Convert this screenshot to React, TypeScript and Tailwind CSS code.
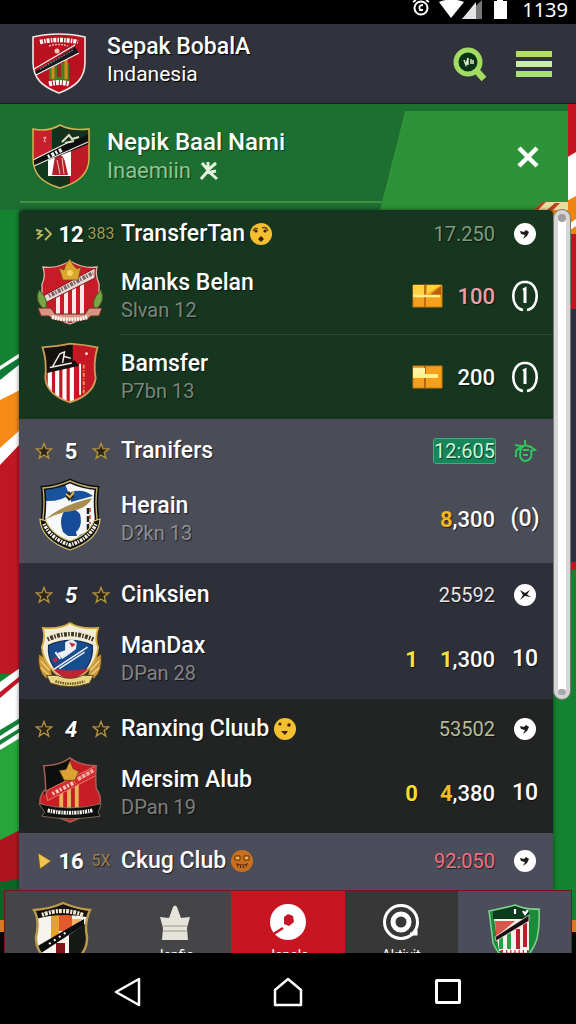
import React from 'react';

type IconProps = { className?: string };

type Item = {
  name: string;
  detail: string;
  crest: React.ReactNode;
  value: React.ReactNode;
  badge: React.ReactNode;
  height: string;
};

type Group = {
  rank: string;
  rankClass?: string;
  before: React.ReactNode;
  after: React.ReactNode;
  title: string;
  emoji?: React.ReactNode;
  total: string;
  totalClass: string;
  icon: React.ReactNode;
  className: string;
  items: Item[];
};

/* ---------- Crests ---------- */

function HeaderCrest() {
  return (
    <svg viewBox="0 0 56 62" className="h-[62px] w-14 shrink-0" aria-hidden="true">
      <defs>
        <clipPath id="header-shield">
          <path d="M2 4Q14 1 28 1Q42 1 54 4V29C54 46 44 54 28 60C12 54 2 46 2 29Z" />
        </clipPath>
      </defs>
      <g clipPath="url(#header-shield)">
        <path d="M0 0H56V62H0Z" fill="#b9111f" />
        <path d="M18 30H38V48Q28 52 18 46Z" fill="#4a7a22" />
        <path d="M22 28V46M35 26V46" stroke="#d98a1e" strokeWidth="3" />
        <path d="M28 27V44" stroke="#a3201c" strokeWidth="4" />
        <path d="M2 40L44 14L48 20L6 42Z" fill="#16181d" />
        <path d="M3 36L44 12M5 42L48 20" stroke="#f2f2f2" strokeWidth="1.2" />
        <path d="M9 36L42 17" stroke="#6c7078" strokeWidth="1.5" strokeDasharray="2 1" />
        <path d="M9 9Q28 5 47 9" fill="none" stroke="#fff" strokeWidth="4.5" strokeDasharray="3 1.2 1.5 1" />
        <path d="M18 13Q28 10 37 13" fill="none" stroke="#e9b3b3" strokeWidth="1.5" strokeDasharray="2 1" />
        <circle cx="26" cy="18" r="2.5" fill="#f1c9b8" />
        <path d="M18 51Q28 48 38 51" fill="none" stroke="#fff" strokeWidth="5" strokeDasharray="3 1 2 1" />
      </g>
      <path d="M2 4Q14 1 28 1Q42 1 54 4V29C54 46 44 54 28 60C12 54 2 46 2 29Z" fill="none" stroke="#f3e9ea" strokeWidth="1.6" />
    </svg>
  );
}

function BannerCrest() {
  return (
    <svg viewBox="0 0 60 66" className="h-[66px] w-[60px] shrink-0" aria-hidden="true">
      <defs>
        <clipPath id="banner-shield">
          <path d="M2 5Q18 8 29 1Q40 7 58 5V34C58 51 46 59 29 64C12 59 2 51 2 34Z" />
        </clipPath>
      </defs>
      <g clipPath="url(#banner-shield)">
        <path d="M0 0H60V66H0Z" fill="#13321e" />
        <path d="M0 0H21V36L0 44Z" fill="#c8202a" />
        <path d="M39 25L60 15V66H39Z" fill="#bd1a26" />
        <path d="M0 42L21 34V66H0Z" fill="#0f3a1e" />
        <path d="M17 31L40 22V52H17Z" fill="#fff" />
        <path d="M24 32C29 28 33 33 34 38L37 51H21Z" fill="#b31f28" />
        <path d="M26 36L29 50M31 34L33 50" stroke="#f3c4c4" strokeWidth="1" />
        <path d="M0 36L58 10V20L0 43Z" fill="#0c100e" />
        <path d="M2 36L36 19M3 42L57 18" stroke="#e9e9e9" strokeWidth="1.2" />
        <path d="M17 33L32 25" stroke="#f5f5f5" strokeWidth="4" strokeDasharray="2 2 3 1.5" />
        <path d="M31 18L38 11L41 15L48 13M34 19L43 17" stroke="#e4dfc1" strokeWidth="2" fill="none" />
        <path d="M12 14L15 13L13 17L15 18" stroke="#f3b8b8" strokeWidth="1" fill="none" />
      </g>
      <path d="M2 5Q18 8 29 1Q40 7 58 5V34C58 51 46 59 29 64C12 59 2 51 2 34Z" fill="none" stroke="#d4b354" strokeWidth="1.5" />
    </svg>
  );
}

function ManksCrest() {
  return (
    <svg viewBox="0 2 70 68" className="h-[68px] w-[70px] shrink-0" aria-hidden="true">
      <defs>
        <clipPath id="manks-shield">
          <path d="M8 11Q22 13 35 5Q48 13 62 11Q60 18 64 28V44Q58 60 35 68Q12 60 7 44V28Q11 20 8 11Z" />
        </clipPath>
      </defs>
      <g clipPath="url(#manks-shield)">
        <path d="M0 0H70V72H0Z" fill="#c71c28" />
        <path d="M23 38V66M31 34V66M39 31V66M47 28V66" stroke="#fbe9e6" strokeWidth="4" />
        <path d="M8 40L60 12V22L10 47Z" fill="#e9d8d4" stroke="#7d1820" />
        <path d="M14 40L58 17" stroke="#7a6668" strokeWidth="4" strokeDasharray="1.5 1.5 3 1" />
      </g>
      <path d="M8 11Q22 13 35 5Q48 13 62 11Q60 18 64 28V44Q58 60 35 68Q12 60 7 44V28Q11 20 8 11Z" fill="none" stroke="#e0b8a8" strokeWidth="1.3" />
      <path d="M4 34Q-1 46 10 54Q15 44 4 34ZM66 34Q71 46 60 54Q55 44 66 34Z" fill="#79a544" stroke="#3c5a24" />
      <path d="M24 12L29 14L31 8L35 3L38 9L42 13L46 11L43 24H28Z" fill="#dba62d" stroke="#7a4d12" strokeWidth=".8" />
      <circle cx="35" cy="17" r="3" fill="#f4d263" />
      <path d="M3 52H16L20 58H50L54 52H67L64 60H56Q51 66 35 65Q19 66 14 60H6Z" fill="#d79483" stroke="#6d2a22" />
      <path d="M17 61Q35 66 53 61" fill="none" stroke="#fff6ef" strokeWidth="4" strokeDasharray="2 .8" />
    </svg>
  );
}

function BamsferCrest() {
  return (
    <svg viewBox="0 0 70 72" className="h-[66px] w-[70px] shrink-0" aria-hidden="true">
      <defs>
        <clipPath id="bamsfer-shield">
          <path d="M5 8Q22 7 35 4Q50 5 65 8Q60 25 63 42Q60 60 35 68Q10 60 8 42Q10 22 5 8Z" />
        </clipPath>
      </defs>
      <g clipPath="url(#bamsfer-shield)">
        <path d="M0 0H70V72H0Z" fill="#c61824" />
        <path d="M0 0H38V26L10 36Z" fill="#15110f" />
        <path d="M13 35V70M21 32V70M29 30V70M37 28V70" stroke="#fff" strokeWidth="4.5" />
        <path d="M8 34L40 22L45 28L10 36Z" fill="#15110f" />
        <path d="M16 29L24 15L29 13L27 25M29 18L36 20M13 30L37 25" stroke="#f1eded" strokeWidth="1.6" fill="none" />
        <path d="M46 26V60" stroke="#fff" strokeWidth="2" />
        <path d="M50 27V58" stroke="#f0a04b" strokeWidth="2" strokeDasharray="4 2 1 2" />
        <circle cx="53" cy="15" r="1.6" fill="#fbd9c9" />
      </g>
      <path d="M5 8Q22 7 35 4Q50 5 65 8Q60 25 63 42Q60 60 35 68Q10 60 8 42Q10 22 5 8Z" fill="none" stroke="#c99d57" strokeWidth="2" />
    </svg>
  );
}

function HerainCrest() {
  return (
    <svg viewBox="0 0 70 74" className="h-[74px] w-[70px] shrink-0" aria-hidden="true">
      <defs>
        <clipPath id="herain-shield">
          <path d="M8 10Q22 9 35 3Q48 9 62 10Q60 22 62 40Q62 58 35 70Q8 58 8 40Q10 22 8 10Z" />
        </clipPath>
      </defs>
      <g clipPath="url(#herain-shield)">
        <path d="M0 0H70V74H0Z" fill="#f7f8fa" />
        <path d="M8 10L30 6L34 16Q28 24 8 23Z" fill="#1a539d" />
        <path d="M36 14Q48 10 58 18L36 24Z" fill="#1a539d" />
        <path d="M28 35Q38 27 45 36Q48 48 41 54L42 58H33L28 54Q24 44 28 35Z" fill="#154b98" />
        <path d="M10 42Q26 27 57 20Q52 32 30 34Q18 37 10 42Z" fill="#a98d4e" />
        <path d="M30 18L34 13L39 19L34 23Z" fill="#2a2417" />
        <path d="M31 16L35 19L39 14" stroke="#e1b845" strokeWidth="2" fill="none" />
        <path d="M53 30V52" stroke="#241a18" strokeWidth="2.5" strokeDasharray="6 2" />
        <path d="M55 30V46" stroke="#cf3b2a" strokeWidth="1.5" strokeDasharray="4 3" />
        <path d="M45 57Q58 52 62 42V62H40Z" fill="#1b5199" />
      </g>
      <path d="M8 10Q22 9 35 3Q48 9 62 10Q60 22 62 40Q62 58 35 70Q8 58 8 40Q10 22 8 10Z" fill="none" stroke="#0d0e12" strokeWidth="4.5" />
      <path d="M8 10Q22 9 35 3Q48 9 62 10Q60 22 62 40Q62 58 35 70Q8 58 8 40Q10 22 8 10Z" fill="none" stroke="#c2ae68" strokeWidth="1.4" />
      <path d="M5 41L11 43Q17 57 35 63Q53 57 59 43L65 41Q64 62 35 72Q6 62 5 41Z" fill="#131316" stroke="#d9c670" strokeWidth="1.2" />
      <path d="M9 46Q16 61 35 67Q54 61 61 46" fill="none" stroke="#f4f1df" strokeWidth="3.6" strokeDasharray="1.4 1.1 2.6 1" />
    </svg>
  );
}

function MandaxCrest() {
  return (
    <svg viewBox="0 0 70 72" className="h-[70px] w-[70px] shrink-0" aria-hidden="true">
      <path d="M3 35Q14 40 17 58L10 60Q1 52 3 35ZM67 35Q56 40 53 58L60 60Q69 52 67 35Z" fill="#c8983c" stroke="#463311" strokeWidth=".8" />
      <path d="M5 42L14 52M5 49L14 57M65 42L56 52M65 49L56 57" stroke="#f5d382" strokeWidth="1.4" />
      <path d="M7 8Q24 10 35 3Q46 10 64 8Q60 20 64 28Q62 50 35 66Q8 50 6 28Q10 18 7 8Z" fill="#f4edd5" stroke="#d4ab42" strokeWidth="1.8" />
      <path d="M13 26Q35 16 58 26Q60 50 35 62Q11 50 13 26Z" fill="#194c8d" stroke="#142f58" strokeWidth="1.4" />
      <path d="M17 50Q35 54 54 50Q47 58 35 62Q24 58 17 50Z" fill="#c12333" />
      <path d="M12 20Q35 9 59 20" fill="none" stroke="#3e3927" strokeWidth="4.5" strokeDasharray="1.6 1.4 3 1.3" />
      <path d="M30 23Q38 17 42 24L41 30L33 36L27 40L22 34L30 31Z" fill="#eef1f6" />
      <path d="M34 23L41 25L37 28Z" fill="#c02f38" />
      <path d="M18 51L53 28M24 50L50 33" stroke="#eaf0f6" strokeWidth="1.5" />
      <path d="M20 33L25 40" stroke="#fff" strokeWidth="2" />
      <circle cx="20" cy="41" r="2.4" fill="#cb2337" />
      <path d="M11 57H22Q35 63 48 57H59L55 65Q35 72 15 65Z" fill="#e9d588" stroke="#594519" />
      <path d="M20 63Q35 68 50 63" fill="none" stroke="#6c5220" strokeWidth="2.6" strokeDasharray="1.5 1" />
    </svg>
  );
}

function MersimCrest() {
  return (
    <svg viewBox="0 0 70 72" className="h-[70px] w-[70px] shrink-0" aria-hidden="true">
      <defs>
        <clipPath id="mersim-shield">
          <path d="M8 12Q24 12 35 4Q46 12 62 12Q61 24 62 36Q67 42 66 50Q54 64 35 70Q16 64 4 50Q4 42 10 36Q10 24 8 12Z" />
        </clipPath>
      </defs>
      <g clipPath="url(#mersim-shield)">
        <path d="M0 0H70V72H0Z" fill="#c61e24" />
        <path d="M0 0H35V26L8 42Z" fill="#0c0f0d" />
        <path d="M26 36V56M34 32V56M42 30V56" stroke="#e8b455" strokeWidth="4" />
        <path d="M10 38L62 12V22L12 48Z" fill="#d22a2c" stroke="#f18c80" strokeWidth=".8" />
        <path d="M17 41L40 29" stroke="#f7c9c0" strokeWidth="4" strokeDasharray="2 2 3 1.5" />
        <path d="M43 26L59 17" stroke="#f0a7a0" strokeWidth="4" strokeDasharray="4 1" />
      </g>
      <path d="M8 12Q24 12 35 4Q46 12 62 12Q61 24 62 36Q67 42 66 50Q54 64 35 70Q16 64 4 50Q4 42 10 36Q10 24 8 12Z" fill="none" stroke="#a8615a" strokeWidth="1.5" />
      <path d="M24 17L31 16L35 7L38 15L44 18L40 27H29Z" fill="#dba334" stroke="#694310" strokeWidth=".7" />
      <path d="M3 51Q35 60 67 51L64 60L66 64Q35 69 6 64L9 60Z" fill="#0d0e0e" stroke="#8e7a68" strokeWidth=".8" />
      <path d="M12 58Q35 63 58 58" fill="none" stroke="#f7f3ee" strokeWidth="4" strokeDasharray="2.4 .9 1.4 .8" />
    </svg>
  );
}

function GoldTabCrest() {
  return (
    <svg viewBox="0 0 60 66" className="h-[66px] w-[60px] shrink-0" aria-hidden="true">
      <defs>
        <clipPath id="gold-shield">
          <path d="M2 9Q18 8 31 2Q42 7 58 9Q52 22 55 36Q56 56 30 66Q3 56 4 36Q8 20 2 9Z" />
        </clipPath>
      </defs>
      <g clipPath="url(#gold-shield)">
        <path d="M0 0H60V66H0Z" fill="#f7f4ee" />
        <path d="M19 14H27V38H19Z" fill="#e2a22b" />
        <path d="M27 14H40V30H27Z" fill="#e3592c" />
        <path d="M40 18H50L40 28Z" fill="#f2b26a" />
        <path d="M37 34L60 18V66H37Z" fill="#151a17" />
        <path d="M4 46L52 18V24L6 54Z" fill="#0b0c0c" />
        <path d="M17 43L36 30" stroke="#fff" strokeWidth="2" strokeDasharray="2 4" />
        <path d="M24 42H33V60H24Z" fill="#7d1518" />
        <path d="M0 0H60V17Q30 10 0 19Z" fill="#111" />
        <path d="M10 14Q30 6 51 14" fill="none" stroke="#f2ead2" strokeWidth="4.2" strokeDasharray="2 1 3 1.2" />
      </g>
      <path d="M2 9Q18 8 31 2Q42 7 58 9Q52 22 55 36Q56 56 30 66Q3 56 4 36Q8 20 2 9Z" fill="none" stroke="#bd9a4b" strokeWidth="2.4" />
    </svg>
  );
}

function GreenTabCrest() {
  return (
    <svg viewBox="0 0 54 66" className="h-[66px] w-[54px] shrink-0" aria-hidden="true">
      <defs>
        <clipPath id="green-shield">
          <path d="M2 10Q17 7 28 4Q39 9 52 8Q53 24 50 38Q44 56 28 65Q13 58 6 42Q4 24 2 10Z" />
        </clipPath>
      </defs>
      <g clipPath="url(#green-shield)">
        <path d="M0 0H54V66H0Z" fill="#1b8a3b" />
        <path d="M7 17L42 14V50H12Z" fill="#f7f3ec" />
        <path d="M6 5H42V18H6Z" fill="#0c3a1c" />
        <path d="M8 20H28L9 36Z" fill="#d9564c" />
        <path d="M14 36V48M22 32V48" stroke="#2f9c46" strokeWidth="4" />
        <path d="M31 28V48M38 22V46" stroke="#b8202c" strokeWidth="4" />
        <path d="M8 36L42 14V20L9 40Z" fill="#111" stroke="#f2dcd8" strokeWidth=".8" />
        <path d="M13 49H42L28 64Z" fill="#cf2634" />
        <path d="M16 50H40" stroke="#fff" strokeWidth="3.5" strokeDasharray="3 1.2" />
        <path d="M28 8V13M36 10L38 13L41 9" stroke="#fff" strokeWidth="2.2" fill="none" />
      </g>
      <path d="M2 10Q17 7 28 4Q39 9 52 8Q53 24 50 38Q44 56 28 65Q13 58 6 42Q4 24 2 10Z" fill="none" stroke="#7bd08a" strokeWidth="1.6" />
    </svg>
  );
}

/* ---------- Small icons ---------- */

function Star() {
  return (
    <svg viewBox="0 0 18 18" className="h-[18px] w-[18px]" aria-hidden="true">
      <path d="M9 1.5L11 6.7L16.6 7L12.2 10.6L13.8 16.2L9 13L4.2 16.2L5.8 10.6L1.4 7L7 6.7Z" fill="#2b2516" stroke="#b0903f" strokeWidth="1.4" />
    </svg>
  );
}

function DoubleArrow() {
  return (
    <svg viewBox="0 0 18 18" className="h-[18px] w-[18px]" fill="none" stroke="#bfb65c" strokeWidth="1.8" aria-hidden="true">
      <path d="M10 3L16 9L10 15M1 5L6 6L3 9L7 10L2 14" />
    </svg>
  );
}

function PlayMark() {
  return (
    <svg viewBox="0 0 18 18" className="h-[18px] w-[18px]" aria-hidden="true">
      <path d="M3 1L16 9L5 17Z" fill="#eec553" stroke="#71521a" strokeWidth=".8" />
    </svg>
  );
}

function Ball({ flip }: { flip?: boolean }) {
  return (
    <svg viewBox="0 0 24 24" className="h-6 w-6" aria-hidden="true">
      <circle cx="12" cy="12" r="11" fill="#fff" />
      {flip ? (
        <path d="M7 7L12 10L17 7L14 11.500L18 14L12 13L7 17L10 12Z" fill="#1a1a1a" />
      ) : (
        <path d="M7 9L11 10L13 8L16 10L14 14L10 17L12 13L8 12Z" fill="#1a1a1a" />
      )}
    </svg>
  );
}

function OneRing() {
  return (
    <svg viewBox="0 0 28 32" className="h-8 w-7" fill="none" stroke="#fff" aria-hidden="true">
      <path d="M12 30C-1 28 -1 4 12 2H16C29 4 29 28 16 30" strokeWidth="2.6" />
      <path d="M12 10L14 9V23" strokeWidth="3" />
    </svg>
  );
}

function GreenMark() {
  return (
    <svg viewBox="0 0 24 24" className="h-6 w-6" fill="none" stroke="#2fc45c" strokeWidth="2" aria-hidden="true">
      <path d="M2 6L8 7L3 12V18M12 1V7M6 11L12 6L18 8L22 11L17 12M8 10Q5 21 12 22Q20 21 18 12M10 11H16M10 16H15" />
    </svg>
  );
}

function Parcel({ open }: { open?: boolean }) {
  return (
    <svg viewBox="0 0 31 24" className="h-6 w-[31px]" aria-hidden="true">
      <path d="M1 1H30V23H1Z" fill="#f5a01c" stroke="#c97810" />
      {open ? (
        <>
          <path d="M13 1V23" stroke="#b8690f" strokeWidth="2" />
          <path d="M1 3H13V12H1Z" fill="#fff2a0" />
          <path d="M1 11H26" stroke="#fff08c" strokeWidth="4" />
        </>
      ) : (
        <>
          <path d="M1 1H12V11H1ZM15 1H29L15 10Z" fill="#ffd33f" />
          <path d="M18 11L29 2V11Z" fill="#b8630b" />
          <path d="M13 1V23" stroke="#c16d10" strokeWidth="2" />
          <path d="M1 12H28" stroke="#fff08c" strokeWidth="2.5" />
        </>
      )}
    </svg>
  );
}

function Face({ kind }: { kind: 'surprised' | 'wink' | 'grim' }) {
  const fill = kind === 'grim' ? '#c9701c' : '#f5c02f';
  return (
    <svg viewBox="0 0 24 24" className="h-6 w-6 shrink-0" aria-hidden="true">
      <circle cx="12" cy="12" r="11" fill={fill} />
      {kind === 'surprised' && (
        <>
          <path d="M4 9Q6 5 9 7M13 6Q17 4 19 9" fill="none" stroke="#6b4310" strokeWidth="1.4" />
          <circle cx="7" cy="9" r="1.6" fill="#3c2408" />
          <circle cx="16" cy="9" r="1.6" fill="#3c2408" />
          <path d="M12 14L15 17L12 20L9 17Z" fill="#3c1e08" />
        </>
      )}
      {kind === 'wink' && (
        <>
          <circle cx="7" cy="7" r="1.6" fill="#3c2408" />
          <circle cx="16" cy="8" r="1.8" fill="#3c2408" />
          <path d="M8 14L15 14L12 18Z" fill="#3c1e08" />
        </>
      )}
      {kind === 'grim' && (
        <>
          <path d="M5 7H10V11H5ZM14 7H19V11H14Z" fill="#f4b04c" stroke="#5b2b08" />
          <path d="M6 14Q12 17 18 14L16 19H8Z" fill="#5b2708" />
          <path d="M9 16V19M12 16V19M15 16V19" stroke="#f4b04c" />
        </>
      )}
    </svg>
  );
}

function StatusIcons({ className }: IconProps) {
  return (
    <svg viewBox="0 0 98 20" className={className} aria-hidden="true">
      <circle cx="9" cy="8" r="6.5" fill="none" stroke="#fff" strokeWidth="2" />
      <path d="M11 5Q6 5 8 10H11M1 2L4 0M14 0L17 2" fill="none" stroke="#fff" strokeWidth="1.8" />
      <path d="M27 2Q39 -3 52 2L39 18Z" fill="#fff" />
      <path d="M70 0V19H50Z" fill="#777" />
      <path d="M64 2V19H50Z" fill="#e4e4e4" />
      <path d="M82 1H85V0H91V1H95V19H82Z" fill="#fff" />
    </svg>
  );
}

/* Painted flag strokes that show at the edges of the panel */
function Backdrop() {
  return (
    <svg viewBox="0 0 576 849" preserveAspectRatio="none" className="absolute inset-0 h-full w-full" aria-hidden="true">
      <path d="M0 0H576V849H0Z" fill="#14822f" />
      <path d="M0 268L20 252V300H0Z" fill="#fff" />
      <path d="M0 266L20 253V260L0 276Z" fill="#0f7a35" />
      <path d="M0 262L20 249V253L0 266Z" fill="#fff" />
      <path d="M0 296L20 286V336L0 346Z" fill="#f58a16" />
      <path d="M0 344L20 326V350L0 362Z" fill="#fff" />
      <path d="M0 361L20 340V570H0Z" fill="#c01725" />
      <path d="M0 578L20 564V640L0 652Z" fill="#fff" />
      <path d="M0 588L20 572V577L0 594Z" fill="#c01725" />
      <path d="M0 626L20 614V619L0 632Z" fill="#17803a" />
      <path d="M0 636L20 624V628L0 641Z" fill="#17803a" />
      <path d="M0 646L20 634V726L0 738Z" fill="#25a53a" />
      <path d="M0 736L20 726V780H0Z" fill="#ae1420" />
      <path d="M0 778L20 775V816H0Z" fill="#0c6427" />
      <path d="M0 816H576V828H0Z" fill="#d9761f" />
      <path d="M0 828H576V849H0Z" fill="#050505" />
      <path d="M566 0H576V50L566 54Z" fill="#c5131f" />
      <path d="M566 54L576 48V98H566Z" fill="#fff" />
      <path d="M536 106L548 97H576V132H553Z" fill="#f7e9c8" />
      <path d="M534 107L545 98H553L542 107Z" fill="#b5451d" />
      <path d="M548 107L576 92V132H560Z" fill="#ee8412" />
      <path d="M566 122L576 115V122L566 129Z" fill="#fff" />
      <path d="M566 130H576V205H566Z" fill="#c5131f" />
      <path d="M566 205H576V460H566Z" fill="#2c3040" />
      <path d="M566 458H576V466H566Z" fill="#c5131f" />
    </svg>
  );
}

/* ---------- Data ---------- */

const GROUPS: Group[] = [
  {
    rank: '12',
    before: <DoubleArrow />,
    after: <span className="text-base text-[#9c9a52]">383</span>,
    title: 'TransferTan',
    emoji: <Face kind="surprised" />,
    total: '17.250',
    totalClass: 'text-[#7f9a80]',
    icon: <Ball />,
    className: 'bg-[#17361f]',
    items: [
      { name: 'Manks Belan', detail: 'Slvan 12', crest: <ManksCrest />, value: <><Parcel /><span className="text-[#ef9da8]">100</span></>, badge: <OneRing />, height: 'min-h-19' },
      { name: 'Bamsfer', detail: 'P7bn 13', crest: <BamsferCrest />, value: <><Parcel open /><span>200</span></>, badge: <OneRing />, height: 'min-h-21' },
    ],
  },
  {
    rank: '5',
    before: <Star />,
    after: <Star />,
    title: 'Tranifers',
    total: '12:605',
    totalClass: 'bg-[#17865a] text-[#c9f5dc] outline outline-[#3fae7e]',
    icon: <GreenMark />,
    className: 'bg-[#4a4c57] pt-2',
    items: [
      { name: 'Herain', detail: 'D?kn 13', crest: <HerainCrest />, value: <span><b className="font-bold text-[#f2b51f]">8</b>,300</span>, badge: '(0)', height: 'min-h-22' },
    ],
  },
  {
    rank: '5',
    rankClass: 'italic',
    before: <Star />,
    after: <Star />,
    title: 'Cinksien',
    total: '25592',
    totalClass: 'text-[#e6e6e8]',
    icon: <Ball flip />,
    className: 'bg-[#2d3039] pt-2',
    items: [
      { name: 'ManDax', detail: 'DPan 28', crest: <MandaxCrest />, value: <><b className="pr-2 font-bold text-[#f3e63a]">1</b><span><b className="font-bold text-[#f3e03a]">1</b>,300</span></>, badge: '10', height: 'min-h-20' },
    ],
  },
  {
    rank: '4',
    rankClass: 'italic',
    before: <Star />,
    after: <Star />,
    title: 'Ranxing Cluub',
    emoji: <Face kind="wink" />,
    total: '53502',
    totalClass: 'text-[#b4bd97]',
    icon: <Ball />,
    className: 'bg-[#222423] pt-1.5',
    items: [
      { name: 'Mersim Alub', detail: 'DPan 19', crest: <MersimCrest />, value: <><b className="pr-2 font-bold text-[#f3dc2c]">0</b><span><b className="font-bold text-[#f0bc2a]">4</b>,380</span></>, badge: '10', height: 'min-h-20' },
    ],
  },
  {
    rank: '16',
    before: <PlayMark />,
    after: <span className="text-base text-[#9b8048]">5X</span>,
    title: 'Ckug Club',
    emoji: <Face kind="grim" />,
    total: '92:050',
    totalClass: 'text-[#f0707c]',
    icon: <Ball />,
    className: 'grow bg-[#4b4d5b] pt-1',
    items: [],
  },
];

/* ---------- Sections ---------- */

function GroupHeader({ group }: { group: Group }) {
  return (
    <div className="flex h-12 items-center pr-3.5 pl-4">
      <div className="flex w-[86px] shrink-0 items-center">
        {group.before}
        <span className={`w-9 text-center text-[22px] font-bold ${group.rankClass ?? ''}`}>{group.rank}</span>
        <span className="flex w-6 justify-center">{group.after}</span>
      </div>
      <h2 className="flex grow items-center gap-1 text-[23px] font-medium">
        {group.title}
        {group.emoji}
      </h2>
      <span className={`rounded-xs text-xl leading-6 ${group.totalClass}`}>{group.total}</span>
      <span className="ml-4 flex w-7 justify-center">{group.icon}</span>
    </div>
  );
}

function ItemRow({ item }: { item: Item }) {
  return (
    <li className={`flex items-center pr-3.5 pl-4 ${item.height}`}>
      <div className="flex w-[86px] shrink-0 pb-2">{item.crest}</div>
      <div className="grow">
        <p className="text-[23px] leading-7 font-medium">{item.name}</p>
        <p className="text-xl leading-[26px] text-white/45">{item.detail}</p>
      </div>
      <div className="flex items-center gap-3.5 text-[22px] font-medium">{item.value}</div>
      <span className="ml-4 flex w-7 justify-center text-[23px] font-medium">{item.badge}</span>
    </li>
  );
}

export default function App() {
  return (
    <div className="flex min-h-screen flex-col bg-black font-['Roboto','Liberation_Sans',sans-serif] text-white">
      <div className="flex h-6 items-center justify-end gap-3 pr-2 pb-1">
        <StatusIcons className="h-5 w-[98px]" />
        <span className="font-['Noto_Sans',sans-serif] text-xl leading-5">1139</span>
      </div>

      <header className="flex h-20 items-center border-b border-black/40 bg-[#30333b] pr-6 pl-[31px] [text-shadow:1px_1px_1px_#000]">
        <HeaderCrest />
        <div className="ml-5 grow pb-2">
          <h1 className="text-[23px] leading-7 font-medium">Sepak BobalA</h1>
          <p className="text-[21px] leading-[26px]">Indanesia</p>
        </div>
        <button type="button" aria-label="Search" className="mr-7">
          <svg viewBox="0 0 36 36" className="h-9 w-9" fill="none" aria-hidden="true">
            <path d="M22 22L32 33" stroke="#a3dc62" strokeWidth="6.5" />
            <circle cx="16" cy="16" r="12" fill="#0b3316" stroke="#a3dc62" strokeWidth="5" />
            <path d="M12 14L14 19L16 12V19M19 13V18M21 14V18" stroke="#dbeec8" strokeWidth="1.5" />
          </svg>
        </button>
        <button type="button" aria-label="Menu" className="flex w-9 flex-col gap-1">
          <span className="h-1.5 bg-[#b3dd62]" />
          <span className="h-1.5 bg-[#c8ecaa]" />
          <span className="h-1.5 bg-[#a9e072]" />
        </button>
      </header>

      <main className="relative flex grow flex-col">
        <Backdrop />
        <section className="relative mr-2 flex h-[106px] items-center bg-[#1d6e30] pr-7 pl-[31px]">
          <svg viewBox="0 0 568 106" preserveAspectRatio="none" className="absolute inset-0 h-full w-full" aria-hidden="true">
            <path d="M405 7H568V106H380Z" fill="#2d9238" />
            <path d="M0 0H568V7H0Z" fill="#1c7030" />
            <path d="M20 98H382" stroke="#4f9a55" strokeWidth="1.5" />
            <path d="M535 106L543 98H568V106Z" fill="#f3d9a0" />
            <path d="M534 106L542 98H546L538 106ZM547 106L555 99H560L553 106Z" fill="#b5451d" />
          </svg>
          <div className="relative flex grow items-center">
            <BannerCrest />
            <div className="ml-4 grow pb-1 [text-shadow:1px_1px_1px_#0a3a18]">
              <h2 className="text-2xl leading-8 font-medium">Nepik Baal Nami</h2>
              <p className="flex items-center gap-2 text-[22px] leading-[26px] text-[#8fc492]">
                Inaemiin
                <svg viewBox="0 0 20 20" className="h-5 w-5" fill="none" stroke="#e2f2dc" strokeWidth="3" aria-hidden="true">
                  <path d="M3 2L9 9L17 2M9 1V13M2 18L9 10L18 18M12 11L17 10" />
                </svg>
              </p>
            </div>
            <button type="button" aria-label="Close">
              <svg viewBox="0 0 24 24" className="h-6 w-6" fill="none" stroke="#fff" strokeWidth="4.5" aria-hidden="true">
                <path d="M3 3L21 21M21 3L3 21" />
              </svg>
            </button>
          </div>
        </section>

        <div className="relative mr-[23px] ml-[19px] flex grow flex-col overflow-hidden rounded-t shadow-[0_0_4px_#0008] [text-shadow:1px_1px_1px_#0009]">
          {GROUPS.map((group) => (
            <section key={group.title} className={group.className}>
              <GroupHeader group={group} />
              <ul>
                {group.items.map((item, i) => (
                  <React.Fragment key={item.name}>
                    {i > 0 && <li aria-hidden="true" className="ml-[102px] h-px bg-white/10" />}
                    <ItemRow item={item} />
                  </React.Fragment>
                ))}
              </ul>
            </section>
          ))}
        </div>

        {/* scroll track, hangs over the right edge of the list */}
        <div className="absolute top-[105px] right-[5px] h-[491px] w-[18px] rounded-full border border-[#777] bg-[#d6d6d6] px-1 py-2">
          <div className="h-full bg-white" />
          <span className="absolute top-1 left-1 h-2 w-2 rounded-full bg-[#a39c9c]" />
          <span className="absolute bottom-1 left-1 h-1.5 w-2 rounded-full bg-[#aaa]" />
        </div>

        <nav className="relative mx-1 grid h-[63px] grid-cols-5 overflow-hidden border border-b-0 border-[#701820] bg-[#454547]">
          <a href="#club" aria-label="Club" className="flex justify-center pt-2.5">
            <GoldTabCrest />
          </a>
          <a href="#transfers" className="flex flex-col items-center pt-3">
            <svg viewBox="0 0 32 38" className="h-[38px] w-8 shrink-0" aria-hidden="true">
              <path d="M1 14L10 15L14 4Q16 1 18 4L22 15L31 14L28 25L29 37H3L4 25Z" fill="#e6e4da" />
              <path d="M4 23H28M4 28H28" stroke="#b5b3a8" strokeWidth="1.3" />
            </svg>
            <span className="pt-1 text-sm">Jenfia</span>
          </a>
          <a href="#home" className="flex flex-col items-center bg-[#c71522] pt-3">
            <svg viewBox="0 0 38 38" className="h-[38px] w-[38px] shrink-0" aria-hidden="true">
              <circle cx="19" cy="19" r="18" fill="#fff" />
              <path d="M15 14L19 11L24 13L25 19L20 23L15 21Z" fill="#c71522" />
              <path d="M14 25L3 32" stroke="#c71522" strokeWidth="2.5" />
            </svg>
            <span className="pt-1 text-sm">Jenela</span>
          </a>
          <a href="#activity" className="flex flex-col items-center bg-[#373737] pt-3">
            <svg viewBox="0 0 38 38" className="h-[38px] w-[38px] shrink-0" fill="none" stroke="#fff" aria-hidden="true">
              <circle cx="19" cy="19" r="16.5" strokeWidth="3" />
              <circle cx="19" cy="19" r="8" strokeWidth="5" />
              <path d="M28 31H34V27" strokeWidth="3" />
            </svg>
            <span className="pt-1 text-sm">Aktivit</span>
          </a>
          <a href="#league" aria-label="League" className="flex justify-center bg-[#4b4d5b] pt-2.5">
            <GreenTabCrest />
          </a>
        </nav>
      </main>

      <footer className="flex h-[71px] items-center bg-black px-12 pt-1.5">
        <button type="button" aria-label="Back" className="flex flex-1 justify-center">
          <svg viewBox="0 0 28 30" className="h-[30px] w-7" fill="none" stroke="#fff" strokeWidth="2.5" strokeLinejoin="round" aria-hidden="true">
            <path d="M25 2V28L2 15Z" />
          </svg>
        </button>
        <button type="button" aria-label="Home" className="flex flex-1 justify-center">
          <svg viewBox="0 0 30 30" className="h-[30px] w-[30px]" fill="none" stroke="#fff" strokeWidth="2.5" strokeLinejoin="round" aria-hidden="true">
            <path d="M15 2L28 13V28H2V13Z" />
          </svg>
        </button>
        <button type="button" aria-label="Recent apps" className="flex flex-1 justify-center">
          <span className="h-[25px] w-[26px] rounded-xs border-[3px] border-white" />
        </button>
      </footer>
    </div>
  );
}
